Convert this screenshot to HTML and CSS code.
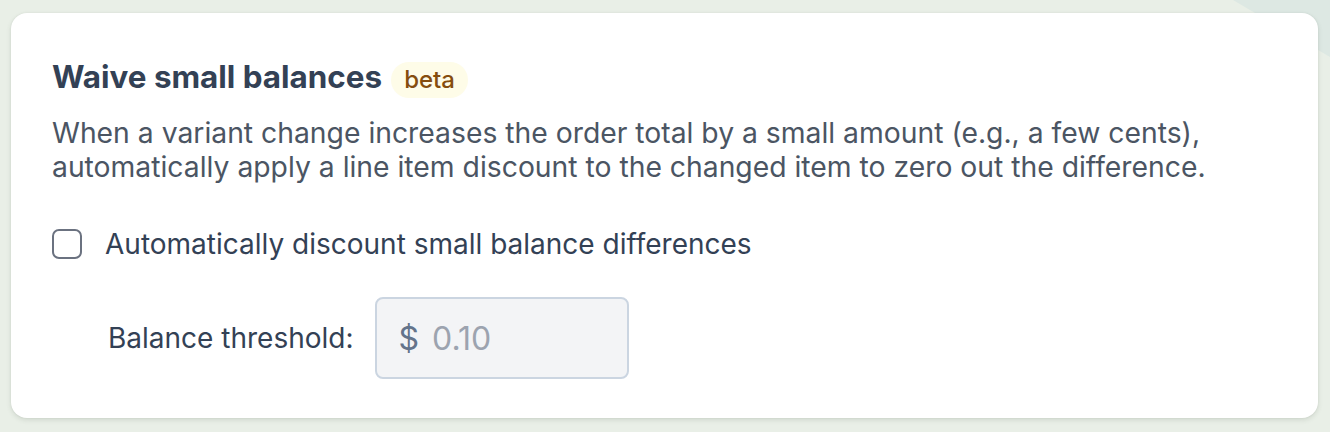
FILE: index.html
```html
<!DOCTYPE html>
<html>
<head>
<meta charset="utf-8">
<link rel="stylesheet" href="styles.css">
</head>
<body>
<div class="bg-shape"></div>
<div class="card">
  <div class="title-row">
    <h2 class="title">Waive small balances</h2>
    <span class="badge">beta</span>
  </div>
  <p class="desc">When a variant change increases the order total by a small amount (e.g., a few cents), automatically apply a line item discount to the changed item to zero out the difference.</p>
  <label class="check-row">
    <span class="checkbox"></span>
    <span class="check-label">Automatically discount small balance differences</span>
  </label>
  <div class="threshold-row">
    <span class="threshold-label">Balance threshold:</span>
    <div class="input">
      <span class="currency">$</span>
      <span class="value">0.10</span>
    </div>
  </div>
</div>
</body>
</html>
```
FILE: styles.css
```css
html, body {
  margin: 0;
  padding: 0;
}
body {
  background: #e9efe7;
  font-family: Inter, "Noto Sans", sans-serif;
  width: 1330px;
  height: 432px;
  overflow: hidden;
  position: relative;
}
.bg-shape {
  position: absolute;
  top: 0;
  right: 0;
  width: 97px;
  height: 57px;
  background: #dde8e3;
  clip-path: polygon(0 0, 100% 0, 100% 100%);
}
.card {
  position: relative;
  margin: 13px 12px 0 11px;
  height: 405px;
  box-sizing: border-box;
  background: #fff;
  border-radius: 16px;
  box-shadow: 0 2px 5px rgba(60, 80, 60, 0.14), 0 0 2px rgba(60, 80, 60, 0.08);
  padding: 44px 41px 0 41px;
}
.title-row {
  display: flex;
  align-items: baseline;
  gap: 9px;
}
.title {
  margin: 0;
  font-size: 31.4px;
  line-height: 40px;
  font-weight: 700;
  color: #334155;
}
.badge {
  display: inline-block;
  background: #fefce8;
  color: #854d0e;
  font-size: 24px;
  line-height: 36px;
  padding: 0 13px;
  border-radius: 18px;
  font-weight: 500;
}
.desc {
  margin: 19px 0 0;
  font-size: 28.3px;
  line-height: 33.6px;
  color: #4b5563;
}
.check-row {
  display: flex;
  align-items: center;
  margin-top: 43px;
  height: 34px;
}
.checkbox {
  width: 26px;
  height: 26px;
  border: 2px solid #6b7280;
  border-radius: 7px;
  box-sizing: content-box;
  flex: none;
}
.check-label {
  margin-left: 23px;
  font-size: 28px;
  color: #334155;
}
.threshold-row {
  display: flex;
  align-items: center;
  margin-top: 36px;
  padding-left: 56px;
}
.threshold-label {
  font-size: 28px;
  color: #334155;
  margin-right: 21px;
}
.input {
  width: 254px;
  height: 82px;
  box-sizing: border-box;
  border: 2px solid #cbd5e1;
  border-radius: 8px;
  background: #f3f4f6;
  display: flex;
  align-items: center;
  padding-left: 22px;
  font-size: 32px;
}
.currency {
  color: #64748b;
}
.value {
  margin-left: 13px;
  color: #9ca3af;
}
```
